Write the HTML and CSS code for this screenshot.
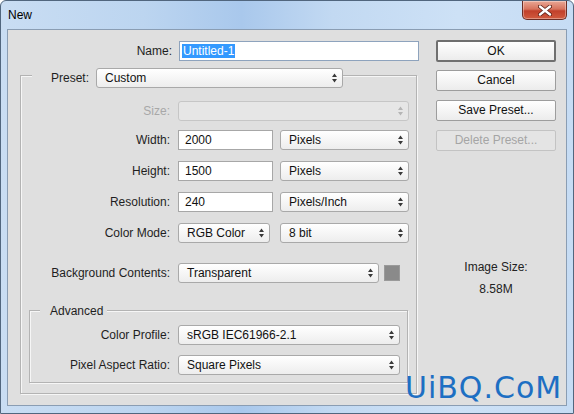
FILE: index.html
```html
<!DOCTYPE html>
<html lang="en">
<head>
    <meta charset="UTF-8">
    <title>New</title>
    <link rel="stylesheet" href="styles.css">
</head>
<body>
    <div class="window">
        <!-- title bar -->
        <div class="titlebar">
            <span class="title">New</span>
            <div class="close-btn">
                <svg width="14" height="11" viewBox="0 0 14 11">
                    <path d="M2 1.5 L12 9.5 M12 1.5 L2 9.5" stroke="#5a1e14" stroke-width="4" stroke-linecap="round"/>
                    <path d="M2 1.5 L12 9.5 M12 1.5 L2 9.5" stroke="#fff" stroke-width="2.4" stroke-linecap="round"/>
                </svg>
            </div>
        </div>

        <div class="client">
            <!-- left side: fields -->
            <div class="main">
                <div class="name-row">
                    <span class="lbl name-lbl">Name:</span>
                    <div class="field name-field"><span class="sel">Untitled-1</span></div>
                </div>

                <div class="group preset-group">
                    <div class="preset-head">
                        <span class="group-title">Preset:</span>
                        <div class="select w-preset"><span>Custom</span><svg class="arrows" width="5" height="10" viewBox="0 0 5 10"><path d="M0 4 L2.5 0.5 L5 4Z M0 6 L2.5 9.5 L5 6Z"/></svg></div>
                    </div>

                    <div class="row row-size">
                        <span class="lbl lbl-main disabled">Size:</span>
                        <div class="select w-full disabled"><span></span><svg class="arrows" width="5" height="10" viewBox="0 0 5 10"><path d="M0 4 L2.5 0.5 L5 4Z M0 6 L2.5 9.5 L5 6Z"/></svg></div>
                    </div>
                    <div class="row row-gap-s">
                        <span class="lbl lbl-main">Width:</span>
                        <div class="field w-num">2000</div>
                        <div class="select w-unit"><span>Pixels</span><svg class="arrows" width="5" height="10" viewBox="0 0 5 10"><path d="M0 4 L2.5 0.5 L5 4Z M0 6 L2.5 9.5 L5 6Z"/></svg></div>
                    </div>
                    <div class="row">
                        <span class="lbl lbl-main">Height:</span>
                        <div class="field w-num">1500</div>
                        <div class="select w-unit"><span>Pixels</span><svg class="arrows" width="5" height="10" viewBox="0 0 5 10"><path d="M0 4 L2.5 0.5 L5 4Z M0 6 L2.5 9.5 L5 6Z"/></svg></div>
                    </div>
                    <div class="row">
                        <span class="lbl lbl-main">Resolution:</span>
                        <div class="field w-num">240</div>
                        <div class="select w-unit"><span>Pixels/Inch</span><svg class="arrows" width="5" height="10" viewBox="0 0 5 10"><path d="M0 4 L2.5 0.5 L5 4Z M0 6 L2.5 9.5 L5 6Z"/></svg></div>
                    </div>
                    <div class="row">
                        <span class="lbl lbl-main">Color Mode:</span>
                        <div class="select w-mode"><span>RGB Color</span><svg class="arrows" width="5" height="10" viewBox="0 0 5 10"><path d="M0 4 L2.5 0.5 L5 4Z M0 6 L2.5 9.5 L5 6Z"/></svg></div>
                        <div class="select w-unit"><span>8 bit</span><svg class="arrows" width="5" height="10" viewBox="0 0 5 10"><path d="M0 4 L2.5 0.5 L5 4Z M0 6 L2.5 9.5 L5 6Z"/></svg></div>
                    </div>
                    <div class="row row-gap-l">
                        <span class="lbl lbl-main">Background Contents:</span>
                        <div class="select w-bg"><span>Transparent</span><svg class="arrows" width="5" height="10" viewBox="0 0 5 10"><path d="M0 4 L2.5 0.5 L5 4Z M0 6 L2.5 9.5 L5 6Z"/></svg></div>
                        <div class="swatch"></div>
                    </div>

                    <!-- advanced -->
                    <div class="group adv-group">
                        <div class="group-title adv-title">Advanced</div>
                        <div class="row adv-row-first">
                            <span class="lbl lbl-adv">Color Profile:</span>
                            <div class="select w-adv"><span>sRGB IEC61966-2.1</span><svg class="arrows" width="5" height="10" viewBox="0 0 5 10"><path d="M0 4 L2.5 0.5 L5 4Z M0 6 L2.5 9.5 L5 6Z"/></svg></div>
                        </div>
                        <div class="row adv-row">
                            <span class="lbl lbl-adv">Pixel Aspect Ratio:</span>
                            <div class="select w-adv"><span>Square Pixels</span><svg class="arrows" width="5" height="10" viewBox="0 0 5 10"><path d="M0 4 L2.5 0.5 L5 4Z M0 6 L2.5 9.5 L5 6Z"/></svg></div>
                        </div>
                    </div>
                </div>
            </div>

            <!-- right side: buttons -->
            <div class="side">
                <div class="btn btn-default">OK</div>
                <div class="btn">Cancel</div>
                <div class="btn">Save Preset...</div>
                <div class="btn disabled">Delete Preset...</div>

                <div class="image-size">
                    <div>Image Size:</div>
                    <div>8.58M</div>
                </div>
            </div>
        </div>

        <div class="watermark">UiBQ.CoM</div>
    </div>
</body>
</html>
```

FILE: styles.css
```css
body {
    margin: 0;
    padding: 0;
    font-family: "Liberation Sans", Arial, sans-serif;
    font-size: 12px;
    color: #1e1e1e;
    background-color: #fff;
}

.window {
    position: relative;
    width: 574px;
    height: 414px;
    box-sizing: border-box;
    border: 1px solid #51667e;
    border-radius: 6px 6px 0 0;
    background: linear-gradient(90deg, #c9ddf3 0%, #bcd5f0 25%, #a9c8ec 42%, #c2d9f2 58%, #cde1f6 80%, #c6dcf4 100%);
    overflow: hidden;
}

/* title bar */
.titlebar {
    display: flex;
    align-items: flex-start;
    height: 28px;
}

.title {
    padding-left: 7px;
    line-height: 28px;
    font-size: 12px;
    color: #000;
}

.close-btn {
    margin-left: auto;
    margin-right: 6px;
    width: 43px;
    height: 18px;
    display: flex;
    justify-content: center;
    align-items: center;
    border: 1px solid #6b2d25;
    border-top: none;
    border-radius: 0 0 5px 5px;
    background: linear-gradient(#e9a795 0%, #d7735d 45%, #c1402b 55%, #d15b3f 100%);
    box-shadow: inset 0 0 0 1px rgba(255, 255, 255, 0.35);
}

/* client area */
.client {
    display: flex;
    margin: 0 6px;
    height: 377px;
    box-sizing: border-box;
    border: 1px solid #8a9db3;
    background-color: #dfdfdf;
}

.main {
    width: 420px;
}

.lbl {
    text-align: right;
    white-space: nowrap;
}

.disabled {
    color: #a8a8a8;
}

.name-row {
    display: flex;
    align-items: center;
    padding-top: 11px;
}

.name-lbl {
    width: 164px;
    margin-right: 7px;
}

.field {
    height: 20px;
    box-sizing: border-box;
    border: 1px solid #a7a7a7;
    background-color: #fff;
    padding-left: 6px;
    line-height: 18px;
    color: #111;
}

.name-field {
    width: 240px;
    border-color: #8ea3bd;
    padding-left: 2px;
}

.sel {
    background-color: #3399ff;
    color: #fff;
    padding: 0 1px;
}

/* group boxes */
.group {
    box-sizing: border-box;
    border: 1px solid #b3b3b3;
    box-shadow: inset 1px 1px 0 #f6f6f6, 1px 1px 0 #f6f6f6;
}

.group-title {
    background-color: #dfdfdf;
}

.preset-group {
    margin: 14px 0 0 12px;
    width: 397px;
    height: 319px;
}

.preset-head {
    display: flex;
    align-items: center;
    margin: -8px 0 0 11px;
}

.preset-head .group-title {
    padding: 0 7px 0 19px;
    line-height: 20px;
}

/* rows */
.row {
    display: flex;
    align-items: center;
    height: 20px;
    margin-top: 11px;
}

.row-size {
    margin-top: 13px;
}

.row-gap-s {
    margin-top: 9px;
}

.row-gap-l {
    margin-top: 20px;
}

.lbl-main {
    width: 149px;
    margin-right: 8px;
}

/* selects */
.select {
    display: flex;
    justify-content: space-between;
    align-items: center;
    height: 20px;
    box-sizing: border-box;
    border: 1px solid #a9a9a9;
    border-radius: 3px;
    background: linear-gradient(#ffffff, #ededed);
    padding: 0 5px 0 8px;
    color: #111;
}

.select .arrows {
    fill: #3a3a3a;
}

.select.disabled {
    background: #e6e6e6;
    border-color: #c6c6c6;
}

.select.disabled .arrows {
    fill: #b5b5b5;
}

.w-preset {
    width: 247px;
}

.w-full {
    width: 231px;
}

.w-num {
    width: 95px;
}

.w-unit {
    width: 129px;
    margin-left: 7px;
}

.w-mode {
    width: 92px;
    margin-right: 3px;
}

.w-bg {
    width: 201px;
}

.swatch {
    width: 16px;
    height: 16px;
    margin-left: 5px;
    background-color: #8a8a8a;
    border: 1px solid #9a9a9a;
    box-sizing: border-box;
}

.w-adv {
    width: 222px;
}

/* advanced box */
.adv-group {
    margin: 27px 0 0 8px;
    width: 379px;
    height: 73px;
}

.adv-title {
    width: max-content;
    margin: -8px 0 0 10px;
    padding: 0 4px 0 10px;
    line-height: 16px;
}

.adv-row-first {
    margin-top: 6px;
}

.adv-row {
    margin-top: 10px;
}

.lbl-adv {
    width: 140px;
    margin-right: 8px;
}

/* buttons column */
.side {
    width: 120px;
    margin-left: 8px;
    padding-top: 10px;
}

.btn {
    height: 21px;
    box-sizing: border-box;
    margin-bottom: 9px;
    border: 1px solid #9d9d9d;
    border-radius: 2px;
    background: linear-gradient(#ffffff, #ececec);
    text-align: center;
    line-height: 19px;
    color: #111;
}

.btn-default {
    height: 22px;
    margin-bottom: 8px;
    border: 2px solid #6f6f6f;
    line-height: 18px;
}

.btn.disabled {
    border-color: #c3c3c3;
    background: #e4e4e4;
    color: #a5a5a5;
}

.image-size {
    margin-top: 105px;
    text-align: center;
    line-height: 22px;
    color: #222;
}

/* watermark over the corner */
.watermark {
    position: absolute;
    left: 404px;
    top: 372px;
    font-family: "DejaVu Sans", sans-serif;
    font-size: 30px;
    line-height: 30px;
    letter-spacing: 1px;
    color: #1d6fc3;
}
```
